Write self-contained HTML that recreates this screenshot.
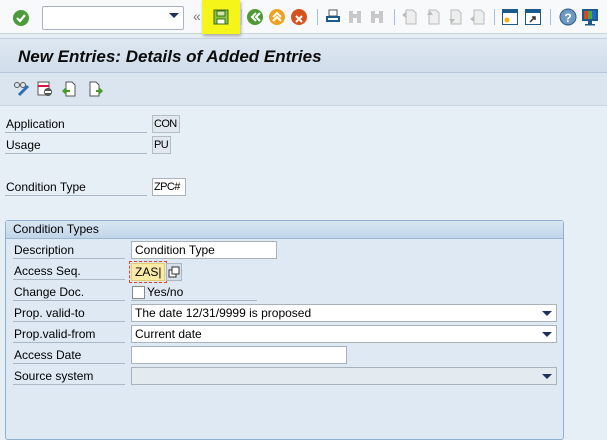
<!DOCTYPE html>
<html><head><style>
*{margin:0;padding:0;box-sizing:border-box}
body{width:607px;height:417px;overflow:hidden;background:#e6eef6;font-family:"Liberation Sans",Arial,sans-serif;font-size:12px;color:#000;position:relative}
.a{position:absolute}
.tb{left:0;top:0;width:607px;height:34px;background:#f7f9fb;border-bottom:1px solid #c9d3dd}
.title{left:0;top:38px;width:607px;height:35px;background:linear-gradient(#dfe8f2,#cfdce9);border-top:1px solid #c3d0dd;border-bottom:1px solid #b6c6d6}
.title span{position:absolute;left:18px;top:8px;font-weight:bold;font-style:italic;font-size:17px;color:#0b0b0b}
.apt{left:0;top:73px;width:607px;height:33px;background:#dbe5ef;border-bottom:1px solid #c8d4e0}
.lbl{font-size:12px;border-bottom:1px solid #aab8c6;height:17px;line-height:17px;padding-left:1px}
.inp{background:#fff;border:1px solid #a9b2bb;height:18px;line-height:16px;padding-left:3px;font-size:12px}
.nar{font-size:11px;letter-spacing:-0.6px;padding-left:1px}
.ro{background:#e1e8ef;border:1px solid #b4bcc4}
.sep{width:1px;height:16px;background:#aac0d6;top:9px}
.dd:after{content:"";position:absolute;right:4px;top:6px;border-left:5px solid transparent;border-right:5px solid transparent;border-top:5px solid #1e3060}
.grp{left:5px;top:220px;width:559px;height:220px;border:1px solid #8fb0cf;border-radius:3px;background:#dee9f3}
.gh{left:0;top:0;width:557px;height:18px;background:linear-gradient(#d8e6f2,#c2d6e9);border-bottom:1px solid #9bb8d3;padding-left:7px;line-height:17px}
</style></head><body>
<div class="a tb">
 <svg class="a" style="left:12px;top:9px" width="18" height="18"><circle cx="9" cy="9" r="8" fill="#4c9a3a"/><path d="M5 9l3 3 5-6" stroke="#fff" stroke-width="2.2" fill="none"/></svg>
 <div class="a dd" style="left:42px;top:6px;width:142px;height:24px;background:#fff;border:1px solid #a7b3bf;border-radius:2px"></div>
 <div class="a" style="left:193px;top:8px;font-size:14px;color:#777">«</div>
 <div class="a" style="left:202px;top:0;width:38px;height:34px;background:#f5f51a;box-shadow:1px 2px 3px #aaa"></div>
 <svg class="a" style="left:213px;top:9px" width="16" height="16"><rect x="1" y="1" width="14" height="14" fill="#8cc63e" stroke="#3d6d1c"/><rect x="4" y="2" width="8" height="5" fill="#cfe8a8" stroke="#3d6d1c"/><rect x="4" y="10" width="8" height="5" fill="#fff" stroke="#3d6d1c"/></svg>
 <div class="a sep" style="left:241px"></div>
 <svg class="a" style="left:247px;top:9px" width="16" height="16"><circle cx="8" cy="8" r="8" fill="#4f9a36"/><path d="M9 4l-4 4 4 4M13 4l-4 4 4 4" stroke="#fff" stroke-width="2" fill="none"/></svg>
 <svg class="a" style="left:269px;top:9px" width="16" height="16"><circle cx="8" cy="8" r="8" fill="#f0a020"/><path d="M4 8l4-4 4 4M4 12l4-4 4 4" stroke="#fff" stroke-width="2" fill="none"/></svg>
 <svg class="a" style="left:291px;top:9px" width="16" height="16"><circle cx="8" cy="8" r="8" fill="#d6521c"/><path d="M5 7l6 6M11 7l-6 6" stroke="#fff" stroke-width="2"/></svg>
 <div class="a sep" style="left:317px"></div>
 <svg class="a" style="left:325px;top:9px" width="16" height="16"><rect x="4" y="1" width="8" height="6" fill="#fff" stroke="#555"/><rect x="1" y="7" width="14" height="6" fill="#1c5a8c"/><rect x="3" y="9" width="10" height="2" fill="#fff"/></svg>
 <svg class="a" style="left:347px;top:9px" width="16" height="16"><rect x="2" y="2" width="4" height="12" fill="#c8c8c8"/><rect x="10" y="2" width="4" height="12" fill="#c8c8c8"/><rect x="5" y="5" width="6" height="4" fill="#c8c8c8"/></svg>
 <svg class="a" style="left:369px;top:9px" width="16" height="16"><rect x="2" y="2" width="4" height="12" fill="#c8c8c8"/><rect x="10" y="2" width="4" height="12" fill="#c8c8c8"/><rect x="5" y="5" width="6" height="4" fill="#c8c8c8"/></svg>
 <div class="a sep" style="left:394px"></div>
 <svg class="a" style="left:401px;top:9px" width="16" height="16"><path d="M5 1h7l3 3v11H5z" fill="#eee" stroke="#bbb"/><path d="M1 6l4-3v6z" fill="#bbb"/></svg>
 <svg class="a" style="left:424px;top:9px" width="16" height="16"><path d="M5 1h7l3 3v11H5z" fill="#eee" stroke="#bbb"/><path d="M3 6l3-4 3 4z" fill="#bbb"/></svg>
 <svg class="a" style="left:446px;top:9px" width="16" height="16"><path d="M5 1h7l3 3v11H5z" fill="#eee" stroke="#bbb"/><path d="M3 10l3 4 3-4z" fill="#bbb"/></svg>
 <svg class="a" style="left:469px;top:9px" width="16" height="16"><path d="M5 1h7l3 3v11H5z" fill="#eee" stroke="#bbb"/><path d="M1 10l4 3v-6z" fill="#bbb"/></svg>
 <div class="a sep" style="left:494px"></div>
 <svg class="a" style="left:502px;top:9px" width="16" height="16"><rect x=".5" y=".5" width="15" height="15" fill="#fff" stroke="#1c5a8c"/><rect x="1" y="1" width="14" height="3" fill="#1c5a8c"/><circle cx="5" cy="11" r="2.5" fill="#f4b400"/></svg>
 <svg class="a" style="left:525px;top:9px" width="16" height="16"><rect x=".5" y=".5" width="15" height="15" fill="#fff" stroke="#1c5a8c"/><rect x="1" y="1" width="14" height="3" fill="#1c5a8c"/><path d="M5 13l5-5M7 8h3v3" stroke="#333" fill="none" stroke-width="1.5"/></svg>
 <div class="a sep" style="left:550px"></div>
 <svg class="a" style="left:559px;top:8px" width="18" height="18"><circle cx="9" cy="9" r="8" fill="#6f99c0" stroke="#2d5e8d"/><text x="9" y="14" font-size="12" font-weight="bold" fill="#fff" text-anchor="middle" font-family="Liberation Sans">?</text></svg>
 <svg class="a" style="left:581px;top:8px" width="18" height="18"><rect x="1" y="1" width="16" height="12" fill="#1c5a8c"/><rect x="3" y="3" width="4" height="8" fill="#d42"/><rect x="7" y="3" width="4" height="8" fill="#4a4"/><rect x="11" y="3" width="4" height="8" fill="#26c"/><rect x="7" y="13" width="4" height="3" fill="#1c5a8c"/><rect x="4" y="16" width="10" height="1.5" fill="#1c5a8c"/></svg>
</div>
<div class="a title"><span>New Entries: Details of Added Entries</span></div>
<div class="a apt">
 <svg class="a" style="left:13px;top:8px" width="18" height="16"><circle cx="4" cy="4" r="2.5" fill="none" stroke="#555"/><circle cx="10" cy="4" r="2.5" fill="none" stroke="#555"/><path d="M6 14l9-9" stroke="#2a70b0" stroke-width="3"/></svg>
 <svg class="a" style="left:37px;top:8px" width="16" height="16"><rect x="1" y="1" width="11" height="13" fill="#fff" stroke="#555"/><rect x="1" y="4" width="11" height="2" fill="#d14"/><circle cx="11" cy="11" r="4" fill="#555"/><rect x="8" y="10" width="6" height="2" fill="#fff"/></svg>
 <svg class="a" style="left:61px;top:8px" width="16" height="16"><path d="M5 1h6l3 3v11H5z" fill="#fff" stroke="#555"/><path d="M1 10l4-4v8z" fill="#4a9a2a"/><rect x="4" y="9" width="5" height="2" fill="#4a9a2a"/></svg>
 <svg class="a" style="left:88px;top:8px" width="16" height="16"><path d="M2 1h6l3 3v11H2z" fill="#fff" stroke="#555"/><path d="M15 10l-4-4v8z" fill="#4a9a2a"/><rect x="8" y="9" width="4" height="2" fill="#4a9a2a"/></svg>
</div>
<div class="a lbl" style="left:5px;top:116px;width:142px">Application</div>
<div class="a inp ro nar" style="left:152px;top:115px;width:28px">CON</div>
<div class="a lbl" style="left:5px;top:137px;width:142px">Usage</div>
<div class="a inp ro nar" style="left:152px;top:136px;width:19px">PU</div>
<div class="a lbl" style="left:5px;top:179px;width:142px">Condition Type</div>
<div class="a inp nar" style="left:152px;top:178px;width:34px">ZPC#</div>
<div class="a grp">
 <div class="a gh">Condition Types</div>
</div>
<div class="a lbl" style="left:13px;top:242px;width:112px">Description</div>
<div class="a inp" style="left:131px;top:241px;width:146px">Condition Type</div>
<div class="a lbl" style="left:13px;top:263px;width:112px">Access Seq.</div>
<div class="a" style="left:129px;top:261px;width:38px;height:22px;border:1.5px dashed #d42;"></div>
<div class="a inp" style="left:131px;top:263px;width:34px;background:#fbe9a6;border-color:#e6c970">ZAS|</div>
<svg class="a" style="left:166px;top:263px" width="16" height="18"><rect x=".5" y=".5" width="15" height="17" fill="#d5e0ea" stroke="#a8b6c4"/><rect x="3" y="7" width="7" height="7" fill="#fff" stroke="#333"/><rect x="6" y="4" width="7" height="7" fill="#fff" stroke="#333"/></svg>
<div class="a lbl" style="left:13px;top:284px;width:112px">Change Doc.</div>
<div class="a" style="left:131px;top:300px;width:126px;height:1px;background:#aab8c6"></div>
<div class="a" style="left:132px;top:286px;width:13px;height:13px;background:#fff;border:1px solid #888"></div>
<div class="a" style="left:147px;top:285px">Yes/no</div>
<div class="a lbl" style="left:13px;top:305px;width:112px">Prop. valid-to</div>
<div class="a inp dd" style="left:131px;top:304px;width:426px">The date 12/31/9999 is proposed</div>
<div class="a lbl" style="left:13px;top:326px;width:112px">Prop.valid-from</div>
<div class="a inp dd" style="left:131px;top:325px;width:426px">Current date</div>
<div class="a lbl" style="left:13px;top:347px;width:112px">Access Date</div>
<div class="a inp" style="left:131px;top:346px;width:216px"></div>
<div class="a lbl" style="left:13px;top:368px;width:112px">Source system</div>
<div class="a inp dd" style="left:131px;top:367px;width:426px;background:#e3eaf0"></div>
</body></html>
